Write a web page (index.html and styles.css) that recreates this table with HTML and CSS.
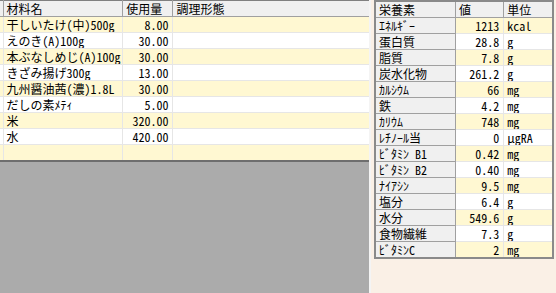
FILE: index.html
```html
<!DOCTYPE html>
<html lang="ja">
<head>
<meta charset="utf-8">
<link rel="stylesheet" href="styles.css">
</head>
<body>
<div class="left">
  <table class="grid ingredients">
    <colgroup><col class="c0"><col class="c1"><col class="c2"><col class="c3"></colgroup>
    <tr class="head"><td></td><td>材料名</td><td>使用量</td><td>調理形態</td></tr>
    <tr class="y"><td></td><td>干しいたけ(中)500g</td><td class="num">8.00</td><td></td></tr>
    <tr class="w"><td></td><td>えのき(A)100g</td><td class="num">30.00</td><td></td></tr>
    <tr class="y"><td></td><td>本ぶなしめじ(A)100g</td><td class="num">30.00</td><td></td></tr>
    <tr class="w"><td></td><td>きざみ揚げ300g</td><td class="num">13.00</td><td></td></tr>
    <tr class="y"><td></td><td>九州醤油茜(濃)1.8L</td><td class="num">30.00</td><td></td></tr>
    <tr class="w"><td></td><td>だしの素ﾒﾃｨ</td><td class="num">5.00</td><td></td></tr>
    <tr class="y"><td></td><td>米</td><td class="num">320.00</td><td></td></tr>
    <tr class="w"><td></td><td>水</td><td class="num">420.00</td><td></td></tr>
    <tr class="y last"><td></td><td></td><td></td><td></td></tr>
  </table>
</div>
<div class="right">
  <table class="grid nutrients">
    <colgroup><col class="n1"><col class="n2"><col class="n3"></colgroup>
    <tr class="head"><td>栄養素</td><td>値</td><td>単位</td></tr>
    <tr class="y"><th>ｴﾈﾙｷﾞｰ</th><td class="num">1213</td><td>kcal</td></tr>
    <tr class="w"><th>蛋白質</th><td class="num">28.8</td><td>g</td></tr>
    <tr class="y"><th>脂質</th><td class="num">7.8</td><td>g</td></tr>
    <tr class="w"><th>炭水化物</th><td class="num">261.2</td><td>g</td></tr>
    <tr class="y"><th>ｶﾙｼｳﾑ</th><td class="num">66</td><td>mg</td></tr>
    <tr class="w"><th>鉄</th><td class="num">4.2</td><td>mg</td></tr>
    <tr class="y"><th>ｶﾘｳﾑ</th><td class="num">748</td><td>mg</td></tr>
    <tr class="w"><th>ﾚﾁﾉｰﾙ当</th><td class="num">0</td><td>μgRA</td></tr>
    <tr class="y"><th>ﾋﾞﾀﾐﾝ B1</th><td class="num">0.42</td><td>mg</td></tr>
    <tr class="w"><th>ﾋﾞﾀﾐﾝ B2</th><td class="num">0.40</td><td>mg</td></tr>
    <tr class="y"><th>ﾅｲｱｼﾝ</th><td class="num">9.5</td><td>mg</td></tr>
    <tr class="w"><th>塩分</th><td class="num">6.4</td><td>g</td></tr>
    <tr class="y"><th>水分</th><td class="num">549.6</td><td>g</td></tr>
    <tr class="w"><th>食物繊維</th><td class="num">7.3</td><td>g</td></tr>
    <tr class="y"><th>ﾋﾞﾀﾐﾝC</th><td class="num">2</td><td>mg</td></tr>
  </table>
</div>
</body>
</html>
```

FILE: styles.css
```css
html, body {
  margin: 0;
  padding: 0;
}
body {
  width: 556px;
  height: 293px;
  overflow: hidden;
  display: flex;
  font-family: "Noto Sans CJK JP", "Noto Sans", sans-serif;
  font-size: 12px;
  font-feature-settings: "hwid" 1;
  color: #000;
  background: #faf0e6;
}
.left {
  width: 369px;
  flex: none;
  background: #ababab;
  border-right: 2px solid #f4f4f4;
}
.right {
  flex: 1;
  padding-left: 3px;
  background: #faf0e6;
}
.grid {
  border-collapse: collapse;
  table-layout: fixed;
  background: #fff;
}
.grid td, .grid th {
  height: 15px;
  padding: 0 0 0 3px;
  line-height: 15px;
  white-space: nowrap;
  overflow: hidden;
  font-weight: normal;
  text-align: left;
  border: 1px solid #e6e6e6;
}
.grid .num {
  text-align: right;
  padding: 0 4px 0 0;
}
.grid tr.y td { background: #fff8d2; }
.grid tr.w td { background: #fff; }
.grid tr.head td {
  background: #f0f0f0;
  border: 1px solid #a0a0a0;
  border-top-color: #808080;
}

/* left grid */
.ingredients {
  width: 369px;
  border-top: 1px solid #808080;
  border-bottom: 2px solid #6e6e6e;
}
.ingredients .c0 { width: 3px; }
.ingredients .c1 { width: 119px; }
.ingredients .c2 { width: 50px; }
.ingredients .c3 { width: 195px; }
.ingredients td:first-child { padding: 0; }
.ingredients tr td:first-child { border-left: none; }
.ingredients tr td:last-child { border-right: none; }

/* right grid */
.nutrients {
  width: 180px;
  border: 2px solid #8a8a8a;
}
.nutrients .n1 { width: 80px; }
.nutrients .n2 { width: 48px; }
.nutrients .n3 { width: 49px; }
.nutrients th {
  background: #f0f0f0;
  border: 1px solid #a0a0a0;
}
.nutrients tr.head td { border-top: none; }
```
